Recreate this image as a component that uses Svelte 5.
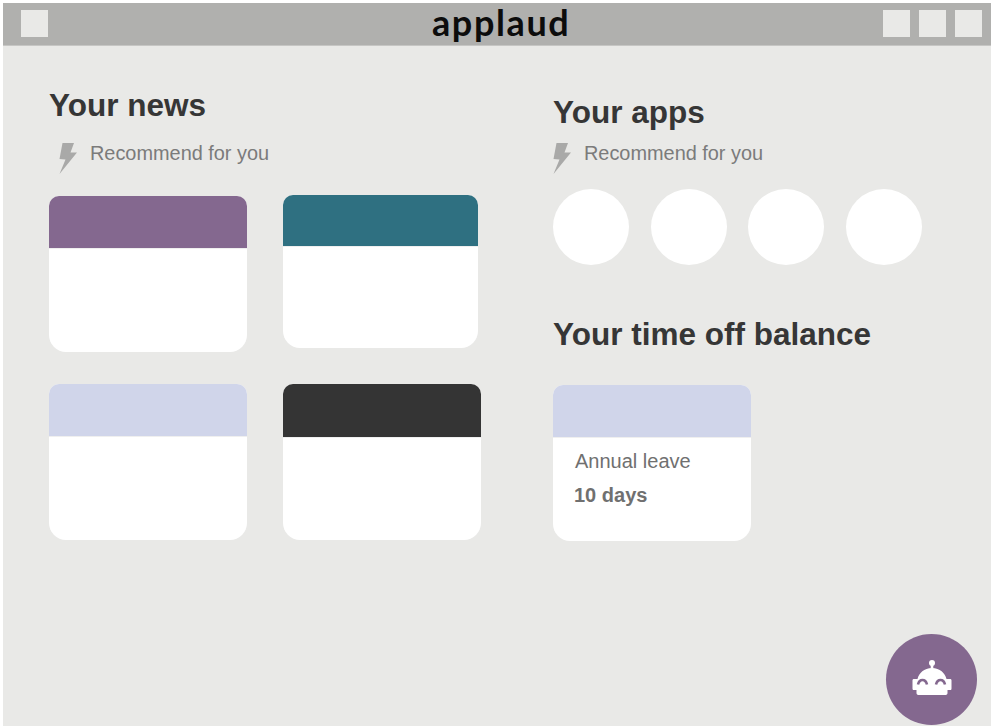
<script lang="ts">
	const news = [
		{ color: '#84688f', mod: '' },
		{ color: '#2f7081', mod: 'narrow' },
		{ color: '#d0d5ea', mod: '' },
		{ color: '#343434', mod: 'tall-top' }
	];
	const apps = [1, 2, 3, 4];
</script>

{#snippet bolt()}
	<svg class="bolt" viewBox="0 0 19 31" aria-hidden="true">
		<path d="M3.5 0H15L11.5 9.5H18L0.5 31L6.5 16.5L0.5 16Z" fill="#a9a9a8" />
	</svg>
{/snippet}

<div class="window">
	<header class="topbar">
		<span class="square"></span>
		<span class="logo">applaud</span>
		<div class="actions">
			<span class="square"></span>
			<span class="square"></span>
			<span class="square"></span>
		</div>
	</header>

	<main class="content">
		<section class="left">
			<h2>Your news</h2>
			<div class="rec">
				{@render bolt()}
				<span>Recommend for you</span>
			</div>
			<div class="news-grid">
				{#each news as item}
					<article class="card {item.mod}">
						<div class="card-top" style:background={item.color}></div>
					</article>
				{/each}
			</div>
		</section>

		<section class="right">
			<h2>Your apps</h2>
			<div class="rec">
				{@render bolt()}
				<span>Recommend for you</span>
			</div>
			<div class="apps">
				{#each apps as _}
					<span class="app"></span>
				{/each}
			</div>
			<h2 class="balance-title">Your time off balance</h2>
			<article class="card leave">
				<div class="card-top" style:background="#d0d5ea"></div>
				<div class="leave-body">
					<div class="leave-name">Annual leave</div>
					<div class="leave-days">10 days</div>
				</div>
			</article>
		</section>
	</main>

	<button class="bot" type="button" aria-label="Assistant">
		<svg viewBox="0 0 40 36" width="40" height="36" aria-hidden="true">
			<circle cx="20" cy="3" r="3" fill="#fff" />
			<rect x="18.7" y="4" width="2.6" height="6" fill="#fff" />
			<path
				d="M20 8C12 8 7 13 5.5 19H2C1 19 0.5 19.5 0.5 20.5V28.5C0.5 29.5 1 30 2 30H4.5V33C4.5 34.5 5.5 35 7 35H33C34.5 35 35.5 34.5 35.5 33V30H38C39 30 39.5 29.5 39.5 28.5V20.5C39.5 19.5 39 19 38 19H34.5C33 13 28 8 20 8Z"
				fill="#fff"
			/>
			<path d="M6 24.5C7.5 18.5 13.5 18.5 15 24.5M24 24.5C25.5 18.5 31.5 18.5 33 24.5" fill="none" stroke="#84688f" stroke-width="2.6" />
		</svg>
	</button>
</div>

<style>
	:global(body) {
		margin: 0;
		background: #fff;
	}

	.window {
		position: relative;
		box-sizing: border-box;
		width: 988px;
		height: 723px;
		margin: 3px 0 0 3px;
		background: #e9e9e7;
		font-family: 'Liberation Sans', Arial, sans-serif;
	}

	.topbar {
		display: grid;
		grid-template-columns: 27px 1fr auto;
		align-items: center;
		box-sizing: border-box;
		height: 43px;
		padding: 0 9px 1px 18px;
		background: #b0b0ae;
		border-bottom: 1px solid #c6c6c4;
	}

	.square {
		display: block;
		width: 27px;
		height: 27px;
		background: #e9e9e7;
	}

	.logo {
		padding: 0 0 3px 384px;
		font-family: Lato, 'Liberation Sans', sans-serif;
		font-size: 36px;
		line-height: 38px;
		font-weight: 700;
		letter-spacing: 1.6px;
		color: #0c0c0c;
	}

	.actions {
		display: flex;
		gap: 9px;
	}

	.content {
		display: grid;
		grid-template-columns: 504px 1fr;
		padding-left: 46px;
	}

	h2 {
		margin: 0;
		font-size: 31.5px;
		line-height: 36px;
		font-weight: 700;
		color: #363636;
	}

	.left {
		padding-top: 41px;
	}

	.right {
		padding-top: 48px;
	}

	.rec {
		display: flex;
		align-items: flex-start;
		font-size: 19.9px;
		line-height: 24px;
		color: #7b7b7b;
	}

	.bolt {
		flex: none;
		width: 19px;
		height: 31px;
		margin-top: 2px;
	}

	.left .rec {
		margin-top: 18px;
		padding-left: 10px;
		gap: 12px;
	}

	.right .rec {
		margin-top: 11px;
		gap: 12px;
	}

	.news-grid {
		display: grid;
		grid-template-columns: 198px 198px;
		grid-auto-rows: 156px;
		column-gap: 36px;
		row-gap: 32px;
		margin-top: 22px;
	}

	.card {
		display: flex;
		flex-direction: column;
		background: #fff;
		border-radius: 10px 10px 17px 17px;
		overflow: hidden;
	}

	.card.narrow {
		width: 195px;
		height: 153px;
		margin-top: -1px;
	}

	.card-top {
		flex: none;
		height: 52px;
		border-bottom: 1px solid #efefef;
	}

	.card.narrow .card-top {
		height: 51px;
	}

	.card.tall-top .card-top {
		height: 53px;
	}

	.apps {
		display: flex;
		gap: 21.6px;
		margin-top: 15px;
	}

	.app {
		display: block;
		width: 76px;
		height: 76px;
		border-radius: 50%;
		background: #fff;
	}

	.balance-title {
		margin-top: 51px;
	}

	.leave {
		width: 198px;
		height: 156px;
		margin-top: 33px;
	}

	.leave-body {
		padding: 11px 21px;
		color: #707070;
		font-size: 20px;
		line-height: 24px;
	}

	.leave-name {
		padding-left: 1px;
	}

	.leave-days {
		margin-top: 10px;
		font-weight: 700;
	}

	.bot {
		position: absolute;
		right: 14px;
		bottom: 1px;
		display: flex;
		align-items: center;
		justify-content: center;
		width: 91px;
		height: 91px;
		padding: 0 0 4px;
		border: none;
		border-radius: 50%;
		background: #84688f;
	}
</style>
